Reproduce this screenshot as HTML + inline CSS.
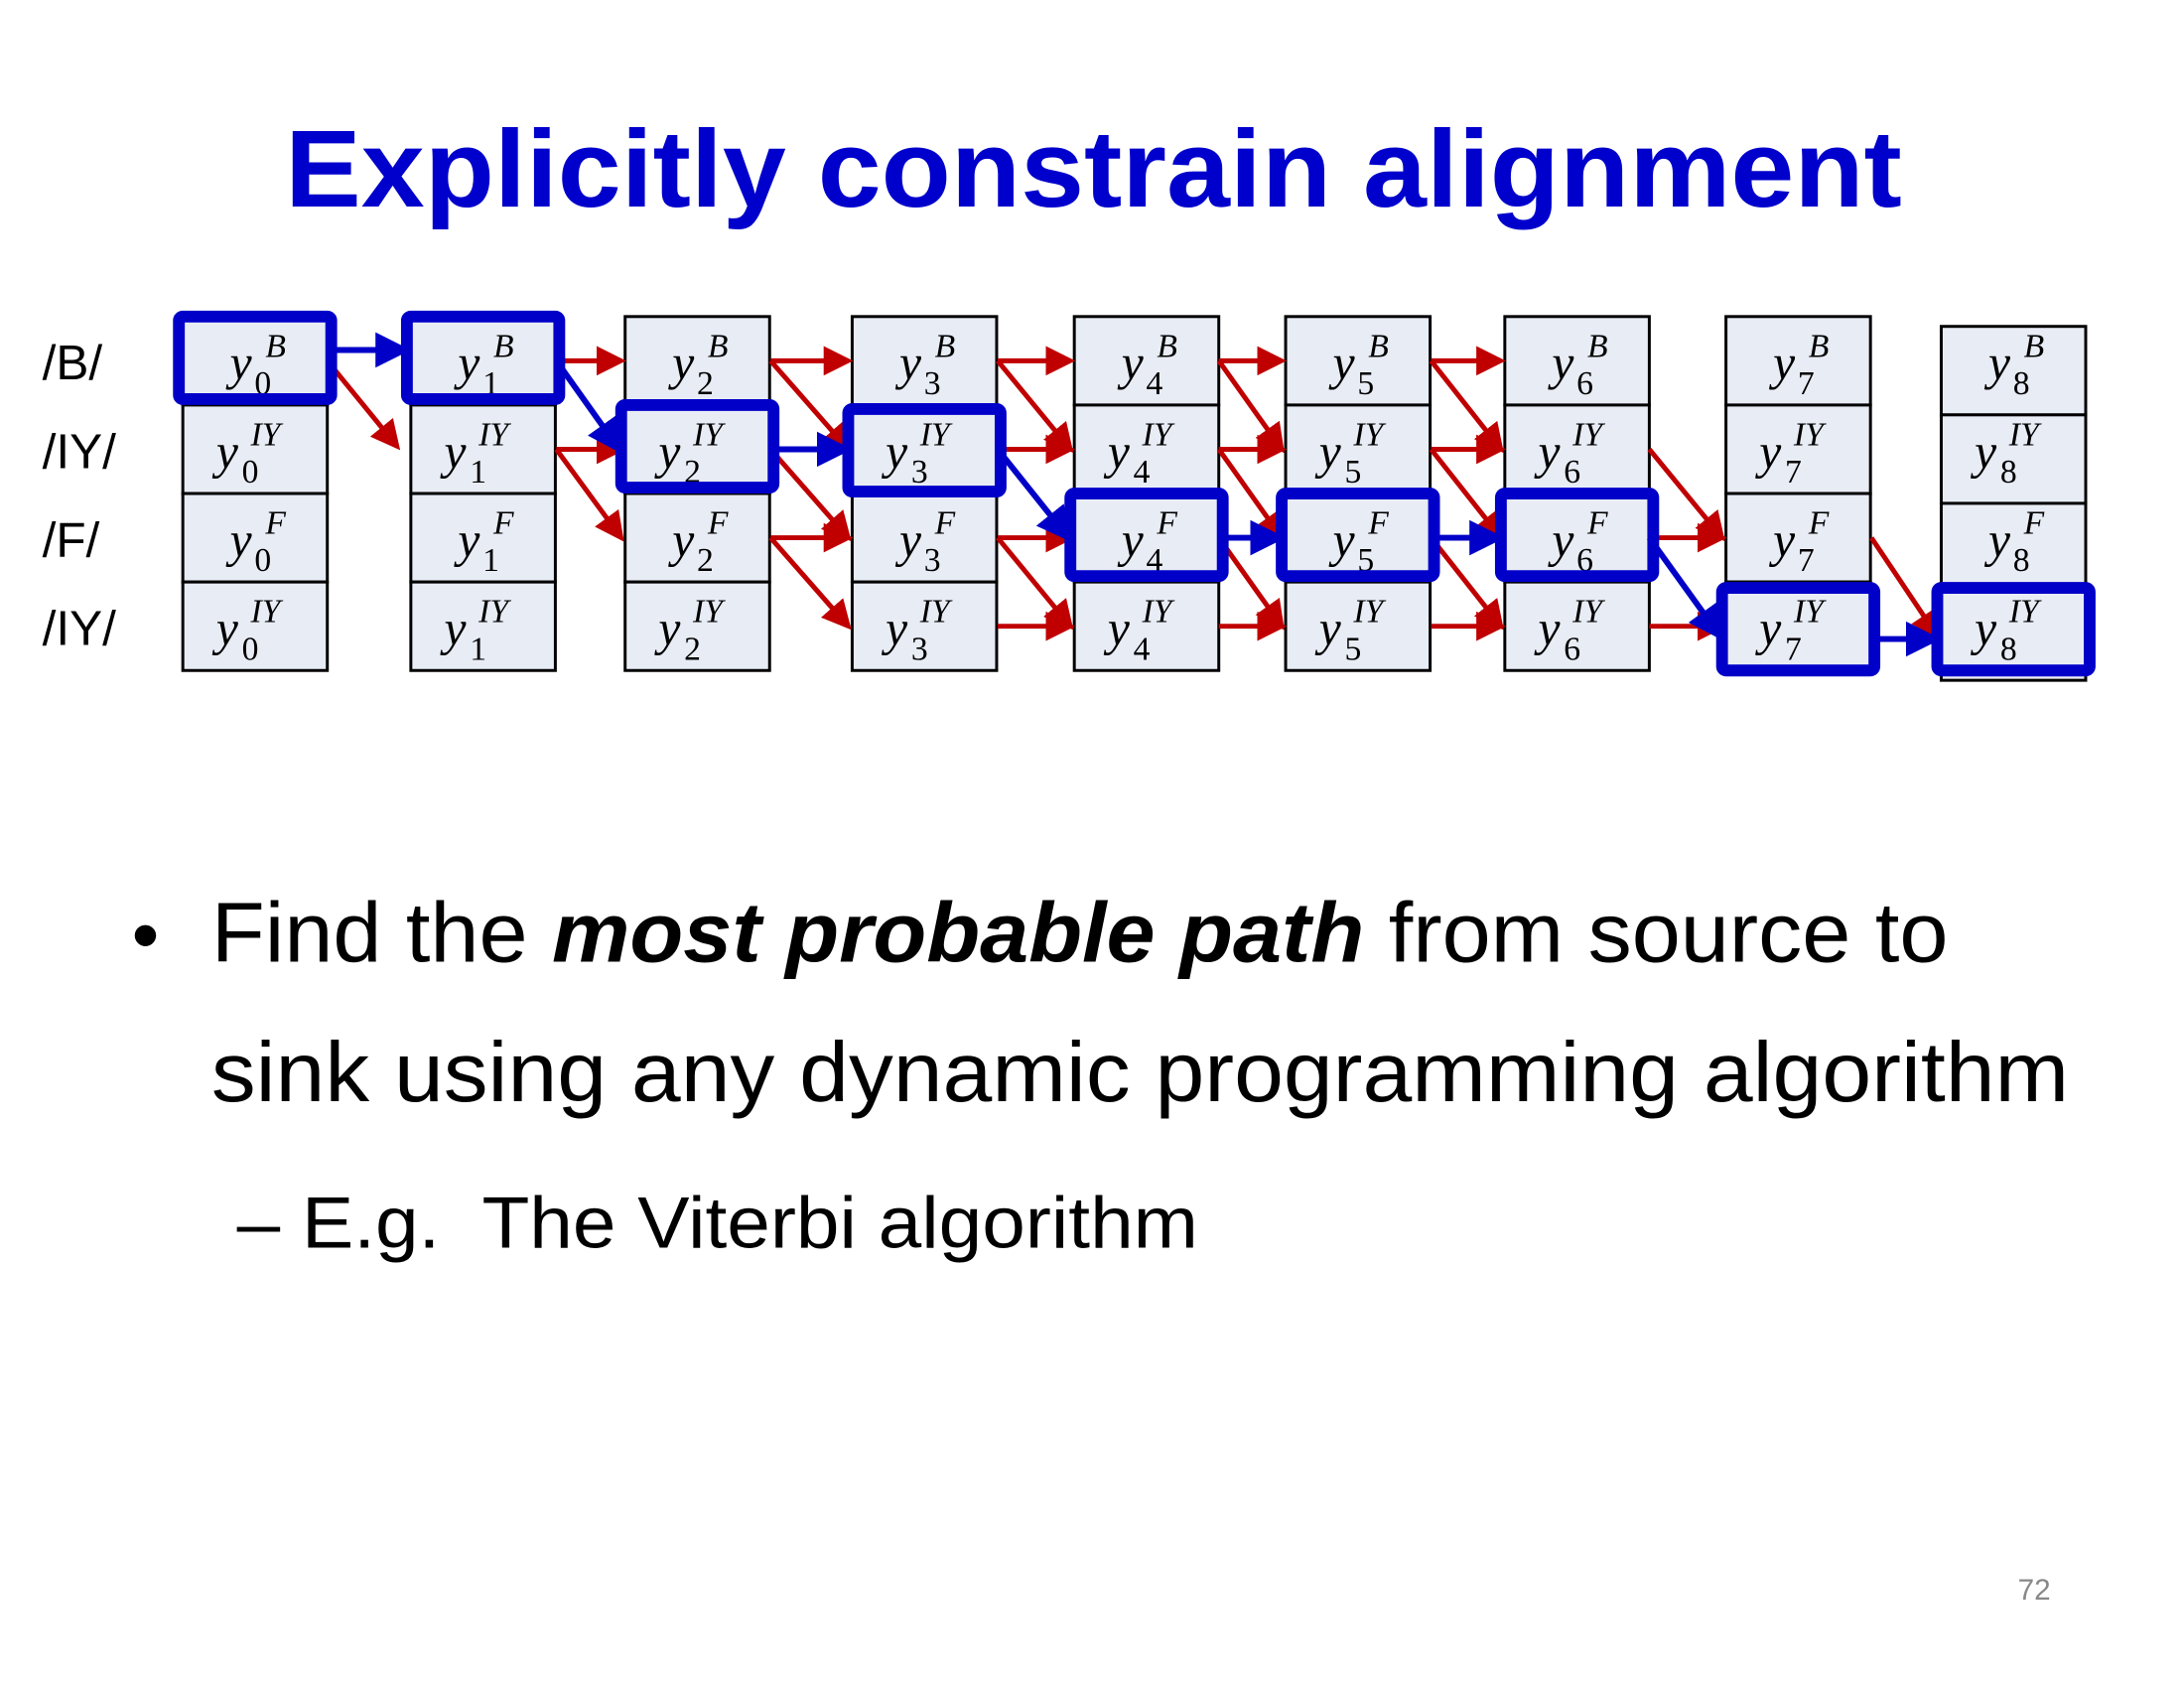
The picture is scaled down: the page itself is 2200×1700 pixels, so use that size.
<!DOCTYPE html>
<html><head><meta charset="utf-8"><style>
html,body{margin:0;padding:0;background:#fff;}
svg{display:block}
.y{font-family:"Liberation Serif",serif;font-style:italic;font-size:50px;fill:#000}
.s{font-family:"Liberation Serif",serif;font-style:italic;font-size:34px;fill:#000}
.n{font-family:"Liberation Serif",serif;font-size:34px;fill:#000}
.lab{font-family:"Liberation Sans",sans-serif;font-size:50px;fill:#000}
.c{fill:#e8ecf5;stroke:#000;stroke-width:3}
.r{stroke:#c00000;stroke-width:5;fill:none;marker-end:url(#ar)}
.b{stroke:#0000c8;stroke-width:6;fill:none;marker-end:url(#ab)}
.bx{fill:none;stroke:#0000c8;stroke-width:12}
</style></head><body>
<svg width="2200" height="1700" viewBox="0 0 2222 1717" preserveAspectRatio="none" xmlns="http://www.w3.org/2000/svg">
<defs>
<marker id="ar" markerWidth="6" markerHeight="6" refX="5" refY="3" orient="auto" markerUnits="strokeWidth"><path d="M0,0 L6,3 L0,6 z" fill="#c00000"/></marker>
<marker id="ab" markerWidth="6" markerHeight="6" refX="5" refY="3" orient="auto" markerUnits="strokeWidth"><path d="M0,0 L6,3 L0,6 z" fill="#0000c8"/></marker>
</defs>
<text x="290" y="210" font-family="Liberation Sans,sans-serif" font-weight="bold" font-size="112" fill="#0000cc" textLength="1645" lengthAdjust="spacingAndGlyphs">Explicitly constrain alignment</text>

<text class="lab" x="43" y="386">/B/</text>
<text class="lab" x="43" y="476">/IY/</text>
<text class="lab" x="43" y="566">/F/</text>
<text class="lab" x="43" y="656">/IY/</text>

<g id="cells">
<rect class="c" x="186" y="322" width="147" height="90"/><rect class="c" x="186" y="412" width="147" height="90"/><rect class="c" x="186" y="502" width="147" height="90"/><rect class="c" x="186" y="592" width="147" height="90"/>
<text class="y" x="234" y="386">y</text><text class="s" x="270" y="363">B</text><text class="n" x="259" y="401">0</text>
<text class="y" x="220" y="476">y</text><text class="s" x="255" y="453">IY</text><text class="n" x="246" y="491">0</text>
<text class="y" x="234" y="566">y</text><text class="s" x="270" y="543">F</text><text class="n" x="259" y="581">0</text>
<text class="y" x="220" y="656">y</text><text class="s" x="255" y="633">IY</text><text class="n" x="246" y="671">0</text>
<rect class="c" x="418" y="322" width="147" height="90"/><rect class="c" x="418" y="412" width="147" height="90"/><rect class="c" x="418" y="502" width="147" height="90"/><rect class="c" x="418" y="592" width="147" height="90"/>
<text class="y" x="466" y="386">y</text><text class="s" x="502" y="363">B</text><text class="n" x="491" y="401">1</text>
<text class="y" x="452" y="476">y</text><text class="s" x="487" y="453">IY</text><text class="n" x="478" y="491">1</text>
<text class="y" x="466" y="566">y</text><text class="s" x="502" y="543">F</text><text class="n" x="491" y="581">1</text>
<text class="y" x="452" y="656">y</text><text class="s" x="487" y="633">IY</text><text class="n" x="478" y="671">1</text>
<rect class="c" x="636" y="322" width="147" height="90"/><rect class="c" x="636" y="412" width="147" height="90"/><rect class="c" x="636" y="502" width="147" height="90"/><rect class="c" x="636" y="592" width="147" height="90"/>
<text class="y" x="684" y="386">y</text><text class="s" x="720" y="363">B</text><text class="n" x="709" y="401">2</text>
<text class="y" x="670" y="476">y</text><text class="s" x="705" y="453">IY</text><text class="n" x="696" y="491">2</text>
<text class="y" x="684" y="566">y</text><text class="s" x="720" y="543">F</text><text class="n" x="709" y="581">2</text>
<text class="y" x="670" y="656">y</text><text class="s" x="705" y="633">IY</text><text class="n" x="696" y="671">2</text>
<rect class="c" x="867" y="322" width="147" height="90"/><rect class="c" x="867" y="412" width="147" height="90"/><rect class="c" x="867" y="502" width="147" height="90"/><rect class="c" x="867" y="592" width="147" height="90"/>
<text class="y" x="915" y="386">y</text><text class="s" x="951" y="363">B</text><text class="n" x="940" y="401">3</text>
<text class="y" x="901" y="476">y</text><text class="s" x="936" y="453">IY</text><text class="n" x="927" y="491">3</text>
<text class="y" x="915" y="566">y</text><text class="s" x="951" y="543">F</text><text class="n" x="940" y="581">3</text>
<text class="y" x="901" y="656">y</text><text class="s" x="936" y="633">IY</text><text class="n" x="927" y="671">3</text>
<rect class="c" x="1093" y="322" width="147" height="90"/><rect class="c" x="1093" y="412" width="147" height="90"/><rect class="c" x="1093" y="502" width="147" height="90"/><rect class="c" x="1093" y="592" width="147" height="90"/>
<text class="y" x="1141" y="386">y</text><text class="s" x="1177" y="363">B</text><text class="n" x="1166" y="401">4</text>
<text class="y" x="1127" y="476">y</text><text class="s" x="1162" y="453">IY</text><text class="n" x="1153" y="491">4</text>
<text class="y" x="1141" y="566">y</text><text class="s" x="1177" y="543">F</text><text class="n" x="1166" y="581">4</text>
<text class="y" x="1127" y="656">y</text><text class="s" x="1162" y="633">IY</text><text class="n" x="1153" y="671">4</text>
<rect class="c" x="1308" y="322" width="147" height="90"/><rect class="c" x="1308" y="412" width="147" height="90"/><rect class="c" x="1308" y="502" width="147" height="90"/><rect class="c" x="1308" y="592" width="147" height="90"/>
<text class="y" x="1356" y="386">y</text><text class="s" x="1392" y="363">B</text><text class="n" x="1381" y="401">5</text>
<text class="y" x="1342" y="476">y</text><text class="s" x="1377" y="453">IY</text><text class="n" x="1368" y="491">5</text>
<text class="y" x="1356" y="566">y</text><text class="s" x="1392" y="543">F</text><text class="n" x="1381" y="581">5</text>
<text class="y" x="1342" y="656">y</text><text class="s" x="1377" y="633">IY</text><text class="n" x="1368" y="671">5</text>
<rect class="c" x="1531" y="322" width="147" height="90"/><rect class="c" x="1531" y="412" width="147" height="90"/><rect class="c" x="1531" y="502" width="147" height="90"/><rect class="c" x="1531" y="592" width="147" height="90"/>
<text class="y" x="1579" y="386">y</text><text class="s" x="1615" y="363">B</text><text class="n" x="1604" y="401">6</text>
<text class="y" x="1565" y="476">y</text><text class="s" x="1600" y="453">IY</text><text class="n" x="1591" y="491">6</text>
<text class="y" x="1579" y="566">y</text><text class="s" x="1615" y="543">F</text><text class="n" x="1604" y="581">6</text>
<text class="y" x="1565" y="656">y</text><text class="s" x="1600" y="633">IY</text><text class="n" x="1591" y="671">6</text>
<rect class="c" x="1756" y="322" width="147" height="90"/><rect class="c" x="1756" y="412" width="147" height="90"/><rect class="c" x="1756" y="502" width="147" height="90"/><rect class="c" x="1756" y="592" width="147" height="90"/>
<text class="y" x="1804" y="386">y</text><text class="s" x="1840" y="363">B</text><text class="n" x="1829" y="401">7</text>
<text class="y" x="1790" y="476">y</text><text class="s" x="1825" y="453">IY</text><text class="n" x="1816" y="491">7</text>
<text class="y" x="1804" y="566">y</text><text class="s" x="1840" y="543">F</text><text class="n" x="1829" y="581">7</text>
<text class="y" x="1790" y="656">y</text><text class="s" x="1825" y="633">IY</text><text class="n" x="1816" y="671">7</text>
<rect class="c" x="1975" y="332" width="147" height="90"/><rect class="c" x="1975" y="422" width="147" height="90"/><rect class="c" x="1975" y="512" width="147" height="90"/><rect class="c" x="1975" y="602" width="147" height="90"/>
<text class="y" x="2023" y="386">y</text><text class="s" x="2059" y="363">B</text><text class="n" x="2048" y="401">8</text>
<text class="y" x="2009" y="476">y</text><text class="s" x="2044" y="453">IY</text><text class="n" x="2035" y="491">8</text>
<text class="y" x="2023" y="566">y</text><text class="s" x="2059" y="543">F</text><text class="n" x="2048" y="581">8</text>
<text class="y" x="2009" y="656">y</text><text class="s" x="2044" y="633">IY</text><text class="n" x="2035" y="671">8</text>
</g>

<g id="red">
<line class="r" x1="333" y1="367" x2="404" y2="454"/>
<line class="r" x1="566" y1="367" x2="632" y2="367"/>
<line class="r" x1="566" y1="457" x2="632" y2="457"/>
<line class="r" x1="566" y1="457" x2="632" y2="547"/>
<line class="r" x1="784" y1="367" x2="863" y2="367"/>
<line class="r" x1="784" y1="367" x2="863" y2="457"/>
<line class="r" x1="784" y1="457" x2="863" y2="547"/>
<line class="r" x1="784" y1="547" x2="863" y2="547"/>
<line class="r" x1="784" y1="547" x2="863" y2="637"/>
<line class="r" x1="1015" y1="367" x2="1089" y2="367"/>
<line class="r" x1="1015" y1="367" x2="1089" y2="457"/>
<line class="r" x1="1015" y1="457" x2="1089" y2="457"/>
<line class="r" x1="1015" y1="547" x2="1089" y2="547"/>
<line class="r" x1="1015" y1="547" x2="1089" y2="637"/>
<line class="r" x1="1015" y1="637" x2="1089" y2="637"/>
<line class="r" x1="1240" y1="367" x2="1304" y2="367"/>
<line class="r" x1="1240" y1="367" x2="1304" y2="457"/>
<line class="r" x1="1240" y1="457" x2="1304" y2="457"/>
<line class="r" x1="1240" y1="457" x2="1304" y2="547"/>
<line class="r" x1="1240" y1="547" x2="1304" y2="637"/>
<line class="r" x1="1240" y1="637" x2="1304" y2="637"/>
<line class="r" x1="1456" y1="367" x2="1527" y2="367"/>
<line class="r" x1="1456" y1="367" x2="1527" y2="457"/>
<line class="r" x1="1456" y1="457" x2="1527" y2="457"/>
<line class="r" x1="1456" y1="457" x2="1527" y2="547"/>
<line class="r" x1="1456" y1="547" x2="1527" y2="637"/>
<line class="r" x1="1456" y1="637" x2="1527" y2="637"/>
<line class="r" x1="1678" y1="457" x2="1752" y2="547"/>
<line class="r" x1="1678" y1="547" x2="1752" y2="547"/>
<line class="r" x1="1678" y1="637" x2="1752" y2="637"/>
<line class="r" x1="1904" y1="547" x2="1971" y2="647"/>
</g>

<g id="blue">
<line class="b" x1="333" y1="356" x2="412" y2="356"/>
<line class="b" x1="566" y1="367" x2="630" y2="457"/>
<line class="b" x1="784" y1="457" x2="861" y2="457"/>
<line class="b" x1="1015" y1="457" x2="1087" y2="547"/>
<line class="b" x1="1240" y1="547" x2="1302" y2="547"/>
<line class="b" x1="1456" y1="547" x2="1525" y2="547"/>
<line class="b" x1="1678" y1="547" x2="1750" y2="647"/>
<line class="b" x1="1904" y1="650" x2="1969" y2="650"/>
<rect class="bx" x="182" y="322" width="155" height="84" rx="4"/>
<rect class="bx" x="414" y="322" width="155" height="84" rx="4"/>
<rect class="bx" x="632" y="412" width="155" height="84" rx="4"/>
<rect class="bx" x="863" y="416" width="155" height="84" rx="4"/>
<rect class="bx" x="1089" y="502" width="155" height="84" rx="4"/>
<rect class="bx" x="1304" y="502" width="155" height="84" rx="4"/>
<rect class="bx" x="1527" y="502" width="155" height="84" rx="4"/>
<rect class="bx" x="1752" y="598" width="155" height="84" rx="4"/>
<rect class="bx" x="1971" y="598" width="155" height="84" rx="4"/>
</g>

<g font-family="Liberation Sans,sans-serif" fill="#000">
<text x="134" y="978" font-size="80">•</text>
<text x="215" y="978" font-size="86" textLength="1767" lengthAdjust="spacingAndGlyphs">Find the <tspan font-weight="bold" font-style="italic">most probable path</tspan> from source to</text>
<text x="215" y="1120" font-size="86" textLength="1890" lengthAdjust="spacingAndGlyphs">sink using any dynamic programming algorithm</text>
<text x="241" y="1269" font-size="74" textLength="978" lengthAdjust="spacingAndGlyphs">– E.g.&#160; The Viterbi algorithm</text>
<text x="2053" y="1627" font-size="30" fill="#888">72</text>
</g>
</svg>
</body></html>
